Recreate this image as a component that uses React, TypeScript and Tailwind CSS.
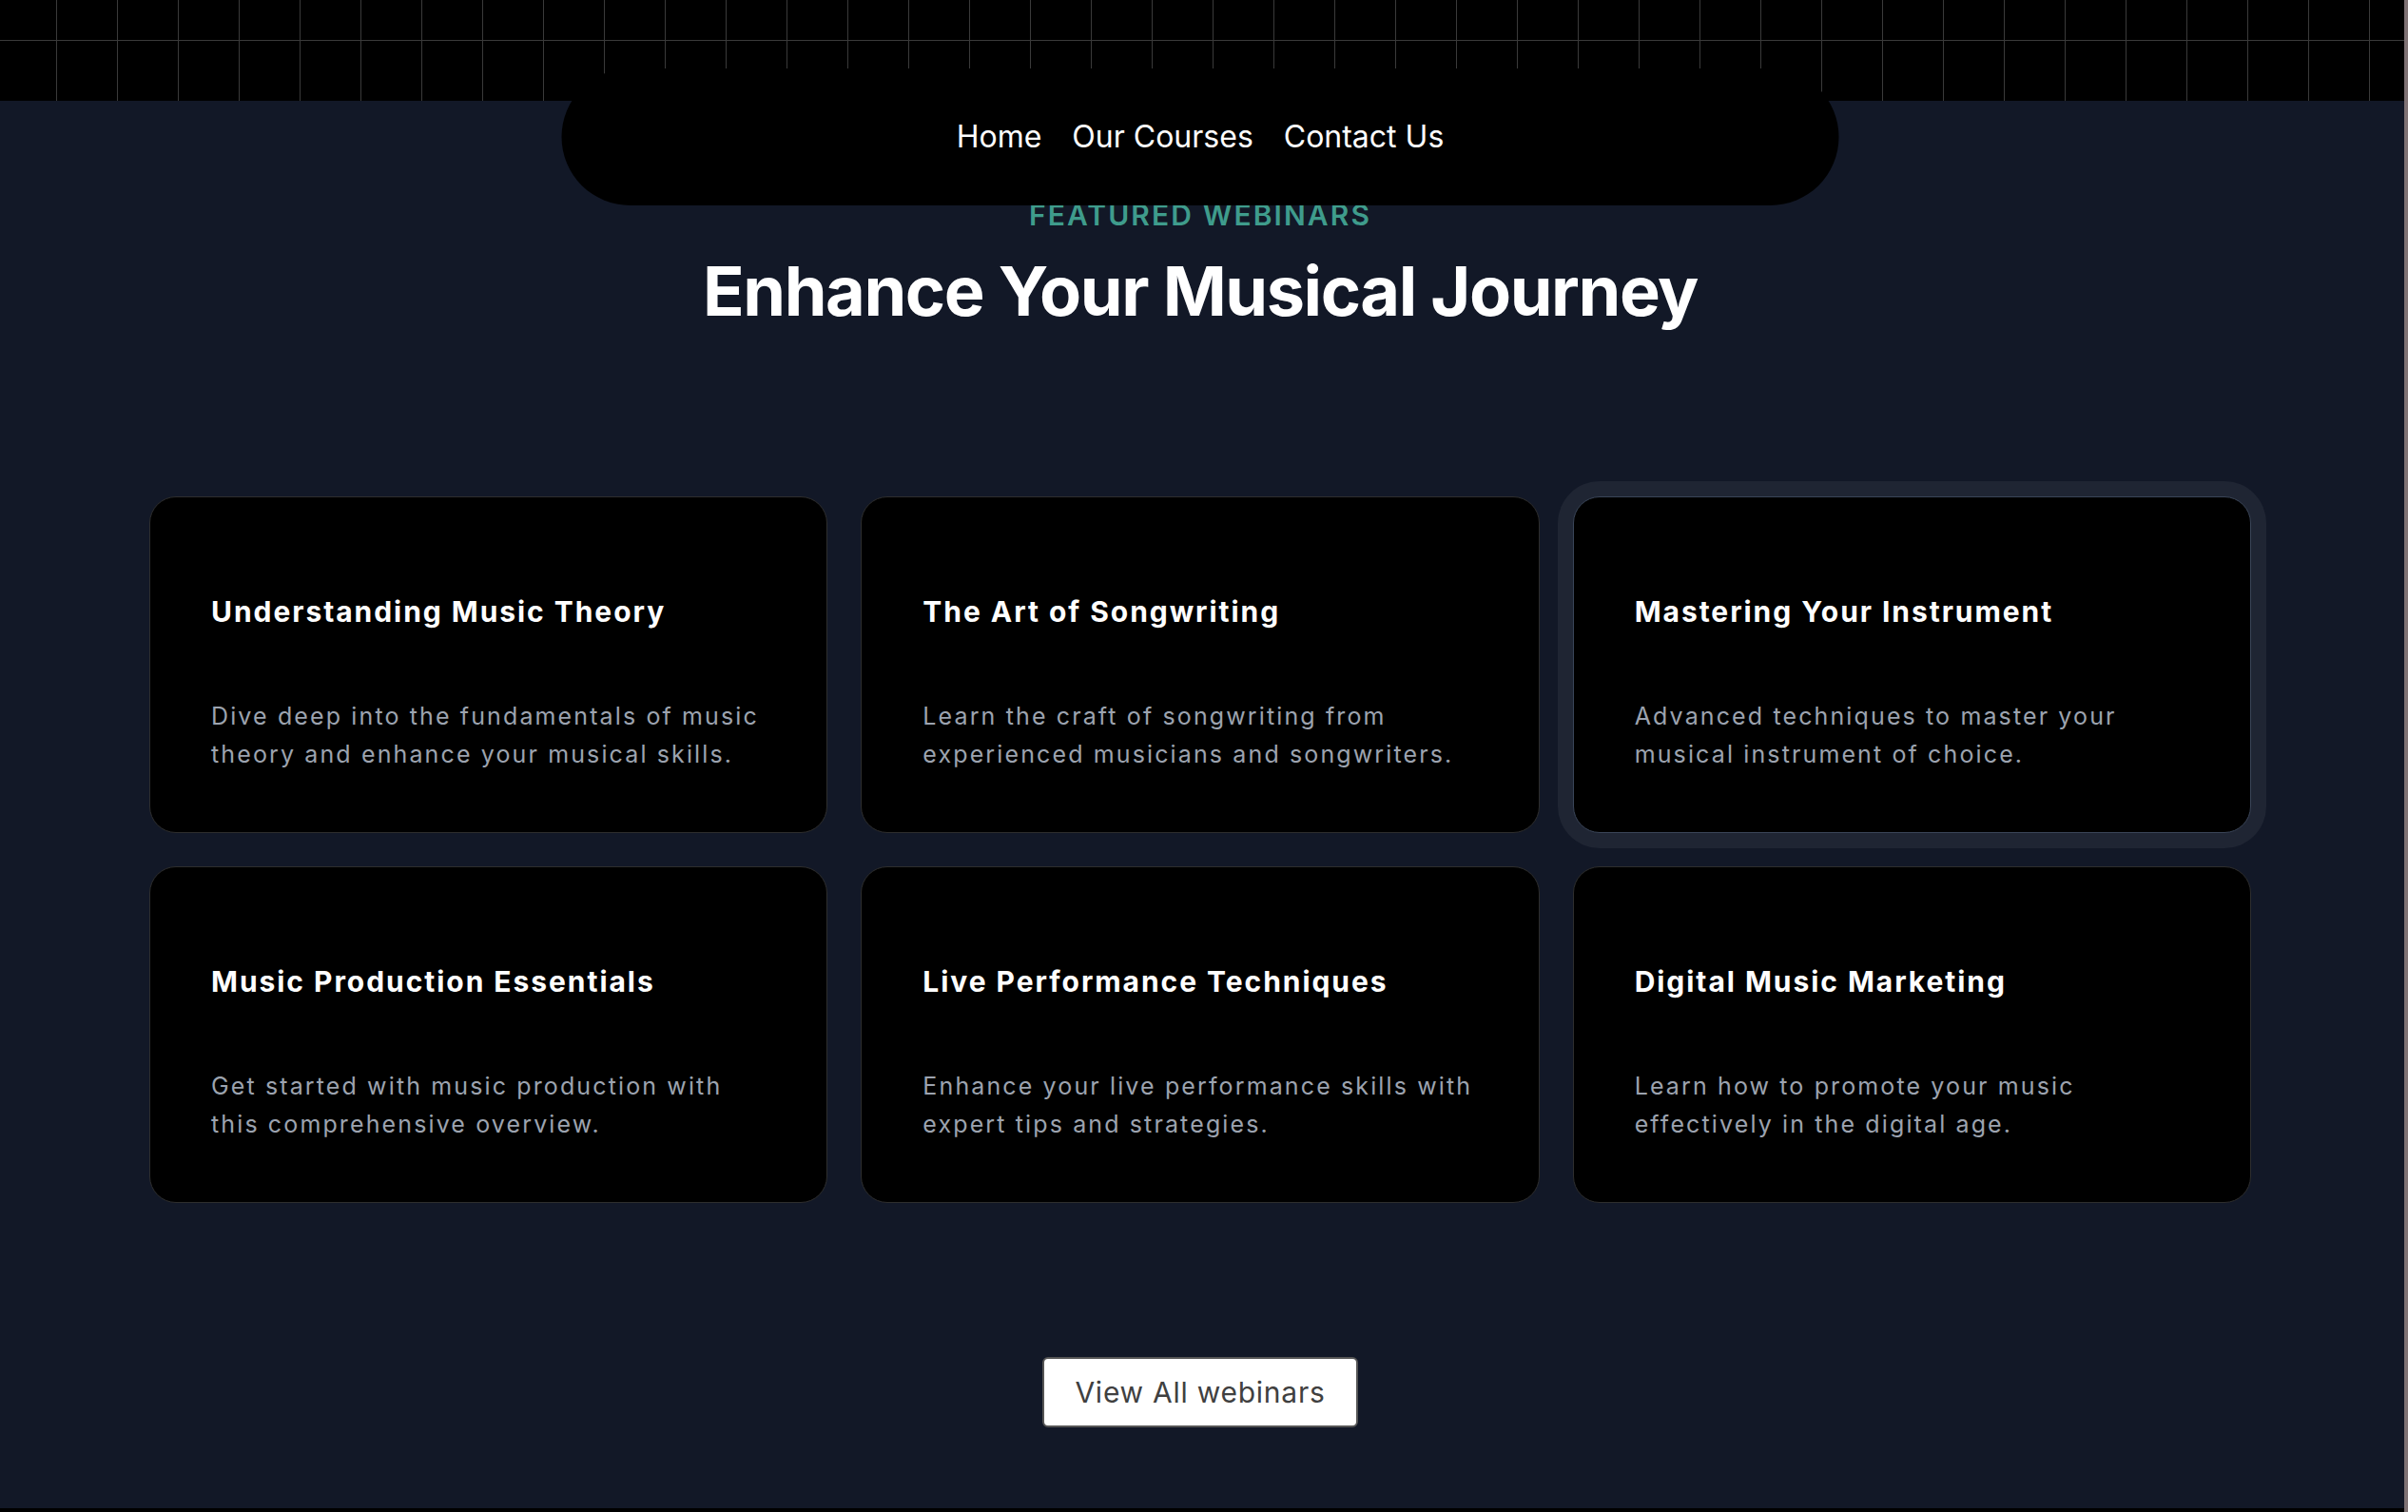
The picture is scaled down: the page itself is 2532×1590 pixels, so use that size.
import React from "react";

const cards = [
  {
    title: "Understanding Music Theory",
    desc: "Dive deep into the fundamentals of music theory and enhance your musical skills.",
  },
  {
    title: "The Art of Songwriting",
    desc: "Learn the craft of songwriting from experienced musicians and songwriters.",
  },
  {
    title: "Mastering Your Instrument",
    desc: "Advanced techniques to master your musical instrument of choice.",
    active: true,
  },
  {
    title: "Music Production Essentials",
    desc: "Get started with music production with this comprehensive overview.",
  },
  {
    title: "Live Performance Techniques",
    desc: "Enhance your live performance skills with expert tips and strategies.",
  },
  {
    title: "Digital Music Marketing",
    desc: "Learn how to promote your music effectively in the digital age.",
  },
];

export default function App() {
  return (
    <div className="flex min-h-[1590px] bg-black font-[Inter,sans-serif]">
      <div className="relative flex-1 flex flex-col">
        <header className="h-[106px] bg-black [background-image:linear-gradient(to_right,#3a3a3a_1px,transparent_1px),linear-gradient(to_bottom,#3a3a3a_1px,transparent_1px)] [background-size:64px_64px] [background-position:59px_42px]" />

        <nav className="absolute left-[calc(50%-2px)] top-[72px] z-10 flex h-[144px] w-[1343px] -translate-x-1/2 items-center justify-center gap-8 rounded-full bg-black text-[32px] text-white">
          <a className="leading-none">Home</a>
          <a className="leading-none">Our Courses</a>
          <a className="leading-none">Contact Us</a>
        </nav>

        <section className="flex h-[1480px] flex-col items-center bg-[#121827] pr-[4px] pt-[102px]">
          <p className="text-[30px] font-semibold uppercase leading-[36px] tracking-[0.07em] text-[#3f9c8c]">
            Featured Webinars
          </p>
          <h2 className="mt-[26px] text-[72px] font-bold leading-none tracking-[-0.02em] text-white">
            Enhance Your Musical Journey
          </h2>

          <div className="mt-[180px] grid w-[2210px] grid-cols-3 gap-x-[35px] gap-y-[35px]">
            {cards.map((c) => (
              <div
                key={c.title}
                className={
                  c.active
                    ? "h-[354px] rounded-[28px] border border-[#3a4558] bg-black px-16 pt-[102px] shadow-[0_0_0_16px_#1f2533]"
                    : "h-[354px] rounded-[28px] border border-[#2e2e2e] bg-black px-16 pt-[102px]"
                }
              >
                <h3 className="text-[30px] font-bold leading-[36px] tracking-[0.065em] text-white">
                  {c.title}
                </h3>
                <p className="mt-[72px] text-[25px] leading-[40px] tracking-[0.085em] text-[#9ca3af]">
                  {c.desc}
                </p>
              </div>
            ))}
          </div>

          <button className="mt-[162px] flex h-[74px] items-center rounded-md border-2 border-[#555555] bg-white px-8 text-[30px] tracking-wide text-[#404040]">
            View All webinars
          </button>
        </section>
        <div className="flex-1 bg-black" />
      </div>
      <div className="w-[4px] bg-[#7f7274]" />
    </div>
  );
}
